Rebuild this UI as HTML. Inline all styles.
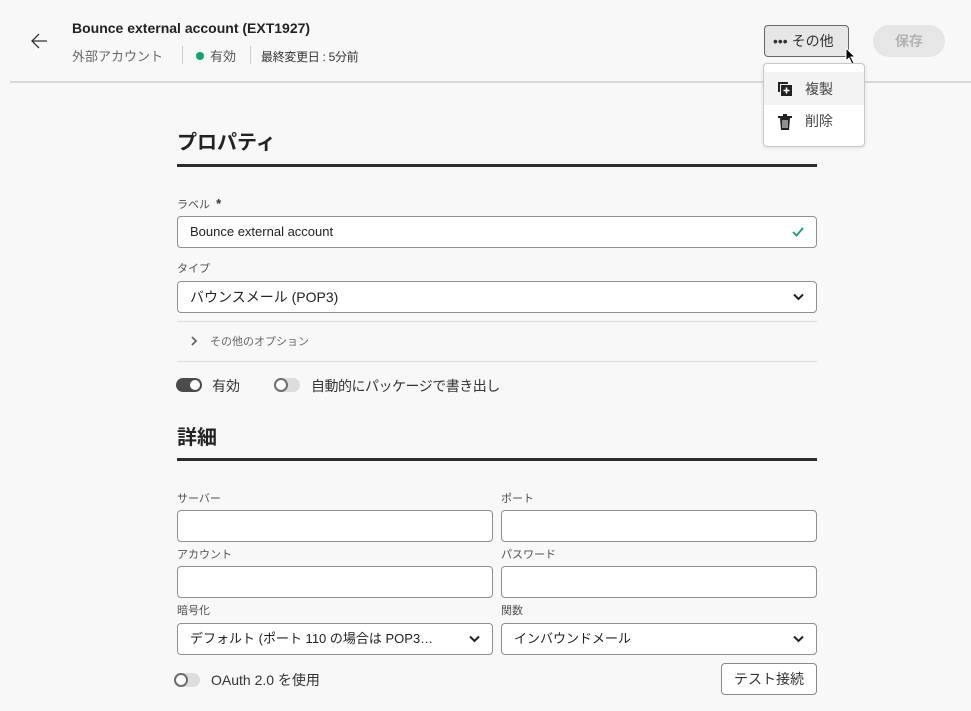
<!DOCTYPE html>
<html><head><meta charset="utf-8"><style>
*{box-sizing:border-box;margin:0;padding:0}
body{width:971px;height:711px;background:#f8f8f8;font-family:"Liberation Sans","Noto Sans CJK JP",sans-serif;color:#222;position:relative;overflow:hidden}
.a{position:absolute}
.lbl{font-size:11px;color:#505050}
.inp{position:absolute;border:1px solid #8f8f8f;border-radius:4px;background:#fff;height:32px;font-size:13px;padding:0 12px;line-height:30px;color:#222}
.chev{position:absolute;right:12px;top:11px}
.hr{position:absolute;left:177px;width:640px;height:3px;background:#2c2c2c}
.tog{position:absolute;width:26px;height:14px;border-radius:7px}
.tog i{position:absolute;top:2px;width:10px;height:10px;border-radius:50%;background:#fff}
.off{position:absolute;width:26px;height:14px;border-radius:7px;background:#ddd}
.off i{position:absolute;left:0;top:0;width:14px;height:14px;border-radius:50%;background:#fff;border:2px solid #6e6e6e}
</style></head><body>
<svg class="a" style="left:29px;top:32px" width="20" height="18" viewBox="0 0 20 18"><path d="M18 9H3M10 2L3 9l7 7" fill="none" stroke="#333" stroke-width="1.3"/></svg>
<div class="a" style="left:72px;top:20px;font-size:14px;font-weight:bold">Bounce external account (EXT1927)</div>
<div class="a" style="left:72px;top:46px;font-size:13px;color:#666">外部アカウント</div>
<div class="a" style="left:182px;top:46px;width:1px;height:18px;background:#ccc"></div>
<div class="a" style="left:196px;top:52px;width:8px;height:8px;border-radius:50%;background:#12a26b"></div>
<div class="a" style="left:210px;top:46px;font-size:13px;color:#555">有効</div>
<div class="a" style="left:250px;top:46px;width:1px;height:18px;background:#ccc"></div>
<div class="a" style="left:261px;top:48px;font-size:12px;color:#333;letter-spacing:-0.3px">最終変更日 : 5分前</div>
<div class="a" style="left:10px;top:81px;width:961px;height:2px;background:#d8d8d8"></div>
<div class="a" style="left:764px;top:25px;width:85px;height:32px;border:1px solid #666;border-radius:4px;background:#e6e6e6;font-size:14px;line-height:30px;padding-left:8px;color:#333">••• その他</div>
<svg class="a" style="left:845px;top:47px" width="12" height="18" viewBox="0 0 12 18"><path d="M1 1v13l3-3 3 6 2-1-3-6h4z" fill="#000" stroke="#fff" stroke-width="1"/></svg>
<div class="a" style="left:873px;top:25px;width:72px;height:32px;border-radius:16px;background:#e6e6e6;color:#b3b3b3;font-size:14px;font-weight:bold;text-align:center;line-height:32px">保存</div>
<div class="a" style="left:763px;top:63px;width:102px;height:84px;border:1px solid #c8c8c8;border-radius:4px;background:#fff;box-shadow:0 1px 4px rgba(0,0,0,.1)">
<div class="a" style="left:0;top:8px;width:100px;height:33px;background:#f3f3f3"></div>
<svg class="a" style="left:13px;top:17px" width="16" height="16" viewBox="0 0 16 16"><path d="M1 1h10v2H3v8H1z" fill="#222"/><rect x="4" y="4" width="11" height="11" fill="#222"/><path d="M9.5 6.5v6M6.5 9.5h6" stroke="#fff" stroke-width="1.6"/></svg>
<div class="a" style="left:41px;top:15px;font-size:14px;color:#444">複製</div>
<svg class="a" style="left:14px;top:50px" width="14" height="16" viewBox="0 0 14 16"><path d="M0 3h14M5 1h4" stroke="#222" stroke-width="2"/><path d="M2 4h10l-1 12H3z" fill="#222"/><path d="M5 6v8M7 6v8M9 6v8" stroke="#fff" stroke-width="1"/></svg>
<div class="a" style="left:41px;top:47px;font-size:14px;color:#444">削除</div>
</div>
<div class="a" style="left:177px;top:126px;font-size:20px;font-weight:bold">プロパティ</div>
<div class="hr" style="top:164px"></div>
<div class="a lbl" style="left:177px;top:196px">ラベル&nbsp; <b style="font-size:13px;color:#333">*</b></div>
<div class="inp" style="left:177px;top:216px;width:640px">Bounce external account<svg class="chev" style="top:9px" width="12" height="12" viewBox="0 0 12 12"><path d="M1 6l3.5 3.5L11 2" fill="none" stroke="#12a26b" stroke-width="1.8"/></svg></div>
<div class="a lbl" style="left:177px;top:260px">タイプ</div>
<div class="inp" style="left:177px;top:281px;width:640px;font-size:14px">バウンスメール (POP3)<svg class="chev" width="11" height="8" viewBox="0 0 11 8"><path d="M1 1.5l4.5 4.5L10 1.5" fill="none" stroke="#222" stroke-width="2"/></svg></div>
<div class="a" style="left:177px;top:321px;width:640px;height:1px;background:#ddd"></div>
<svg class="a" style="left:191px;top:336px" width="7" height="10" viewBox="0 0 7 10"><path d="M1 1l4 4-4 4" fill="none" stroke="#666" stroke-width="1.8"/></svg>
<div class="a" style="left:210px;top:333px;font-size:11px;color:#666">その他のオプション</div>
<div class="a" style="left:177px;top:361px;width:640px;height:1px;background:#ddd"></div>
<div class="tog" style="left:176px;top:378px;background:#4b4b4b"><i style="left:14px"></i></div>
<div class="a" style="left:212px;top:376px;font-size:14px;color:#333">有効</div>
<div class="off" style="left:274px;top:378px"><i></i></div>
<div class="a" style="left:311px;top:376px;font-size:14px;color:#333;letter-spacing:-0.5px">自動的にパッケージで書き出し</div>
<div class="a" style="left:177px;top:421px;font-size:20px;font-weight:bold">詳細</div>
<div class="hr" style="top:458px"></div>
<div class="a lbl" style="left:177px;top:490px">サーバー</div>
<div class="a lbl" style="left:501px;top:490px">ポート</div>
<div class="inp" style="left:177px;top:510px;width:316px"></div>
<div class="inp" style="left:501px;top:510px;width:316px"></div>
<div class="a lbl" style="left:177px;top:546px">アカウント</div>
<div class="a lbl" style="left:501px;top:546px">パスワード</div>
<div class="inp" style="left:177px;top:566px;width:316px"></div>
<div class="inp" style="left:501px;top:566px;width:316px"></div>
<div class="a lbl" style="left:177px;top:602px">暗号化</div>
<div class="a lbl" style="left:501px;top:602px">関数</div>
<div class="inp" style="left:177px;top:623px;width:316px">デフォルト (ポート 110 の場合は POP3…<svg class="chev" width="11" height="8" viewBox="0 0 11 8"><path d="M1 1.5l4.5 4.5L10 1.5" fill="none" stroke="#222" stroke-width="2"/></svg></div>
<div class="inp" style="left:501px;top:623px;width:316px">インバウンドメール<svg class="chev" width="11" height="8" viewBox="0 0 11 8"><path d="M1 1.5l4.5 4.5L10 1.5" fill="none" stroke="#222" stroke-width="2"/></svg></div>
<div class="off" style="left:174px;top:673px"><i></i></div>
<div class="a" style="left:211px;top:670px;font-size:14px;color:#333">OAuth 2.0 を使用</div>
<div class="a" style="left:721px;top:663px;width:96px;height:32px;border:1px solid #888;border-radius:4px;background:#fff;font-size:14px;text-align:center;line-height:30px;color:#333">テスト接続</div>
</body></html>
